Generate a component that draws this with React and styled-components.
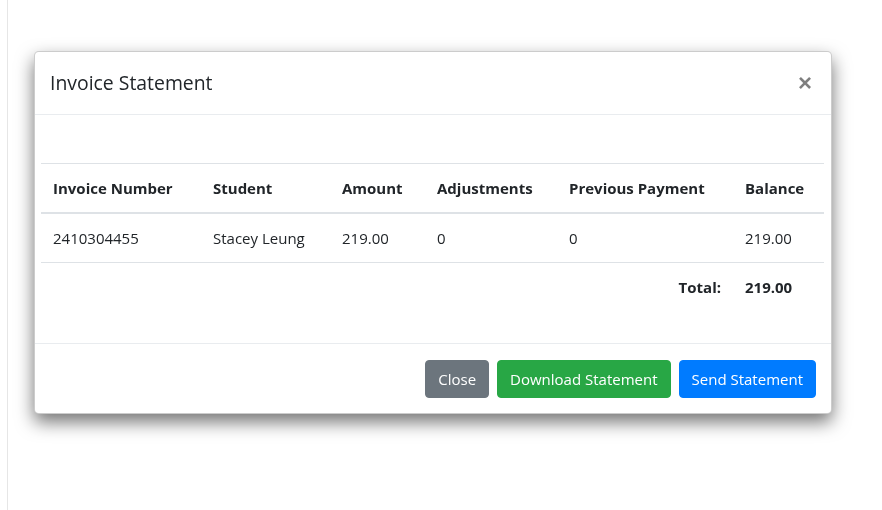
import React from "react";
import styled, { createGlobalStyle } from "styled-components";

const Global = createGlobalStyle`
  html, body { margin: 0; padding: 0; background: #fff; }
  body { font-family: "Open Sans", "Noto Sans", "Liberation Sans", sans-serif; color: #212529; font-size: 15px; line-height: 1.5; }
  * { box-sizing: border-box; }
`;

const Page = styled.div`
  height: 510px;
  margin-left: 7px;
  border-left: 1px solid #e6e6e6;
`;

const Overlay = styled.div`
  position: fixed;
  inset: 0;
  padding: 51px 0 0 34px;
`;

const Dialog = styled.div`
  width: 798px;
  background: #fff;
  border: 1px solid rgba(0, 0, 0, 0.2);
  border-radius: 4.8px;
  box-shadow: 0 8px 18px rgba(0, 0, 0, 0.55);
  display: flex;
  flex-direction: column;
`;

const Header = styled.div`
  display: flex;
  align-items: center;
  justify-content: space-between;
  padding: 16px 16px 16px 15px;
  border-bottom: 1px solid #e9ecef;
`;

const Title = styled.h5`
  margin: 0;
  font-size: 19.4px;
  font-weight: 500;
  line-height: 30px;
`;

const CloseX = styled.button`
  border: 0;
  background: transparent;
  font-size: 24px;
  font-weight: 700;
  line-height: 1;
  color: #000;
  opacity: 0.5;
  padding: 0;
  margin-right: 3px;
  font-family: "Liberation Sans", sans-serif;
`;

const Body = styled.div`
  padding: 16px 7px 16px 6px;
`;

const Spacer = styled.div`
  height: 32px;
`;

const Table = styled.table`
  width: 100%;
  border-collapse: collapse;
  margin-bottom: 16px;
  table-layout: fixed;
`;

const Th = styled.th`
  text-align: left;
  font-weight: 700;
  padding: 12px;
  line-height: 24px;
  border-top: 1px solid #dee2e6;
  border-bottom: 2px solid #dee2e6;
  white-space: nowrap;
`;

const Td = styled.td`
  padding: 12px;
  line-height: 24px;
  border-top: 1px solid #dee2e6;
  text-align: ${(p) => (p.$right ? "right" : "left")};
  font-weight: ${(p) => (p.$bold ? 700 : 400)};
  white-space: nowrap;
`;

const Footer = styled.div`
  display: flex;
  justify-content: flex-end;
  gap: 8px;
  padding: 16px 15px 15px;
  border-top: 1px solid #e9ecef;
`;

const colors = { secondary: "#6c757d", success: "#28a745", primary: "#007bff" };

const Button = styled.button`
  font-family: inherit;
  font-size: 15px;
  line-height: 24px;
  padding: 6px 12px;
  border-radius: 4px;
  color: #fff;
  border: 1px solid ${(p) => colors[p.$variant]};
  background: ${(p) => colors[p.$variant]};
`;

const cols = [160, 129, 95, 132, 176, 91];

export default function App() {
  return (
    <>
      <Global />
      <Page />
      <Overlay>
        <Dialog>
          <Header>
            <Title>Invoice Statement</Title>
            <CloseX>×</CloseX>
          </Header>
          <Body>
            <Spacer />
            <Table>
              <colgroup>
                {cols.map((w, i) => (
                  <col key={i} style={{ width: w }} />
                ))}
              </colgroup>
              <thead>
                <tr>
                  <Th>Invoice Number</Th>
                  <Th>Student</Th>
                  <Th>Amount</Th>
                  <Th>Adjustments</Th>
                  <Th>Previous Payment</Th>
                  <Th>Balance</Th>
                </tr>
              </thead>
              <tbody>
                <tr>
                  <Td>2410304455</Td>
                  <Td>Stacey Leung</Td>
                  <Td>219.00</Td>
                  <Td>0</Td>
                  <Td>0</Td>
                  <Td>219.00</Td>
                </tr>
                <tr>
                  <Td />
                  <Td />
                  <Td />
                  <Td />
                  <Td $right $bold>Total:</Td>
                  <Td $bold>219.00</Td>
                </tr>
              </tbody>
            </Table>
          </Body>
          <Footer>
            <Button $variant="secondary">Close</Button>
            <Button $variant="success">Download Statement</Button>
            <Button $variant="primary">Send Statement</Button>
          </Footer>
        </Dialog>
      </Overlay>
    </>
  );
}
